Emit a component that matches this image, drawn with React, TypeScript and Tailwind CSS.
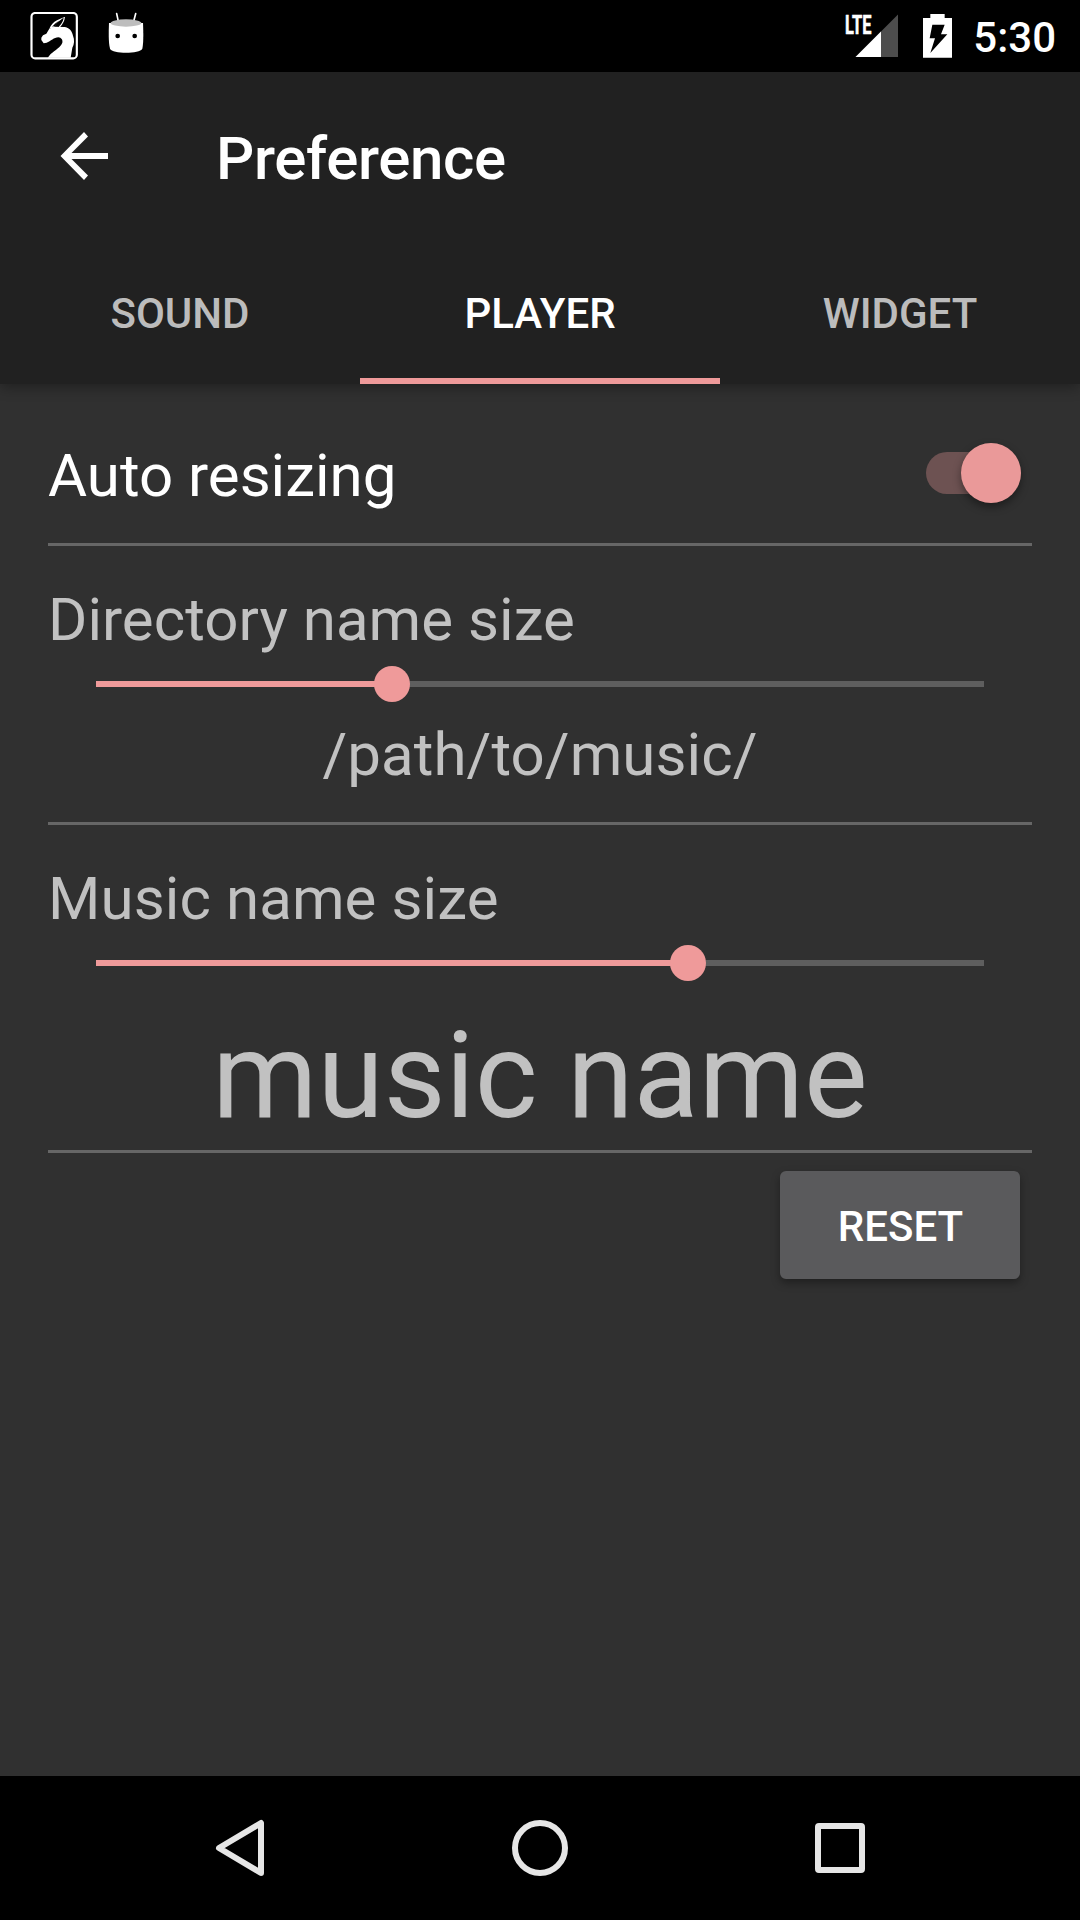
import React from "react";

function DragonIcon() {
  return (
    <svg className="h-12 w-12" viewBox="5 7 144 144" fill="none">
      <rect x="9.500" y="10" width="136" height="136" rx="11" stroke="#fff" strokeWidth="6.500" />
      <path
        d="M39 84L44 77L54 72L63 57L78 51L108 52C123 54 131 64 134 78C139 90 138 103 132 114L127 144H58L67 133C80 122 98 111 102 99C104 91 99 84 90 83C77 83 67 95 55 99L46 101L39 91Z"
        fill="#fff"
      />
      <path d="M63 57C68 46 75 37 86 32L108 22L88 38L75 54Z" fill="#fff" />
      <path d="M71 51C77 44 84 38 92 33L80 49Z" fill="#000" />
      <path d="M108 22C107 34 101 44 93 52" stroke="#fff" strokeWidth="3.500" />
    </svg>
  );
}

function MascotIcon() {
  return (
    <svg className="h-[42px] w-9" viewBox="264 36 108 126">
      <path d="M290 41L295 64M347 41L341 64" stroke="#fff" strokeWidth="5" strokeLinecap="round" />
      <path d="M267 69H369C370 95 371 126 367 146C359 162 277 162 270 146C265 126 266 95 267 69Z" fill="#fff" />
      <ellipse cx="318" cy="69" rx="46" ry="11" fill="#bdbdbd" />
      <circle cx="293" cy="108" r="7" fill="#000" />
      <circle cx="344" cy="108" r="7" fill="#000" />
    </svg>
  );
}

function SignalIcon() {
  return (
    <div className="relative">
      <svg className="h-[48px] w-[54px]" viewBox="0 0 54 48">
        <path d="M53 2.500V45H10.500Z" fill="#4d4d4d" />
        <path d="M36 19.500V45H10.500Z" fill="#fff" />
      </svg>
      <span className="absolute top-[-2px] left-0 origin-left scale-x-[0.63] text-[26px] leading-[30px] font-bold [-webkit-text-stroke:0.6px_white]">
        LTE
      </span>
    </div>
  );
}

function BatteryIcon() {
  return (
    <svg className="ml-[24px] h-11 w-[29px]" viewBox="279 42 87 132">
      <path d="M301 42H344V54H366V173H279V54H301Z" fill="#fff" />
      <path d="M307 74H344L333 103H352L301 159L315 115H299Z" fill="#000" />
    </svg>
  );
}

function StatusBar() {
  return (
    <header className="flex h-[72px] items-start bg-black text-white">
      <div className="flex gap-[30px] pt-3 pl-[30px]">
        <DragonIcon />
        <MascotIcon />
      </div>
      <div className="ml-auto flex pr-[24px]">
        <div className="flex pt-[12px]">
          <SignalIcon />
        </div>
        <div className="flex pt-[14px]">
          <BatteryIcon />
        </div>
        <span className="ml-[21px] pt-[13px] text-[42px] leading-[49px] font-medium">5:30</span>
      </div>
    </header>
  );
}

function Tab({ label, active = false }: { label: string; active?: boolean }) {
  return (
    <button
      className={
        active
          ? "flex-1 border-b-6 border-[#ef9a9a] pt-[9px] text-[42px] leading-[49px] font-medium text-white"
          : "flex-1 border-b-6 border-transparent pt-[9px] text-[42px] leading-[49px] font-medium text-[#bcbcbc]"
      }
    >
      {label}
    </button>
  );
}

function Slider({ value }: { value: number }) {
  return (
    <div className="mx-12 flex h-9 items-center">
      <div className="relative h-1.5 w-full bg-[#5e5e5e]">
        <div className="h-full bg-[#ef9a9a]" style={{ width: `${value * 100}%` }} />
        <div
          className="absolute -top-[15px] -ml-[18px] size-9 rounded-full bg-[#ef9a9a]"
          style={{ left: `${value * 100}%` }}
        />
      </div>
    </div>
  );
}

export default function App() {
  return (
    <div className="flex h-[1920px] w-[1080px] flex-col overflow-hidden bg-[#303030] font-[Roboto,sans-serif]">
      <StatusBar />
      <div className="relative flex h-[312px] flex-col bg-[#212121] shadow-[0_4px_12px_rgba(0,0,0,0.3)]">
        <div className="flex h-[168px] items-center">
          <svg className="ml-[60px] h-12 w-12" viewBox="0 0 48 48">
            <path d="M48 21V27H11.500L28 43.500L24 48L0.500 24L24 0L28 4.500L11.500 21Z" fill="#fff" />
          </svg>
          <h1 className="ml-[108px] pt-[6px] text-[60px] leading-[70px] font-medium tracking-[-0.35px] text-white">
            Preference
          </h1>
        </div>
        <nav className="flex h-36">
          <Tab label="SOUND" />
          <Tab label="PLAYER" active />
          <Tab label="WIDGET" />
        </nav>
      </div>

      <main className="flex flex-1 flex-col px-12 text-[60px] leading-[70px] text-[#c1c1c1]">
        <section className="flex h-[162px] items-start justify-between border-b-3 border-[#666] pt-[57px] text-white">
          <span>Auto resizing</span>
          <div className="mt-[11px] mr-[11px] flex h-[42px] w-[95px] items-center rounded-full bg-[#6d5252]">
            <div className="ml-auto size-[60px] shrink-0 rounded-full bg-[#ea9999] shadow-[0_4px_8px_rgba(0,0,0,0.4)]" />
          </div>
        </section>

        <section className="flex h-[279px] flex-col border-b-3 border-[#666] pt-[39px]">
          <span className="tracking-[0.04px]">Directory name size</span>
          <div className="pt-[11px]">
            <Slider value={1 / 3} />
          </div>
          <span className="pt-[18px] text-center tracking-[0.07px]">/path/to/music/</span>
        </section>

        <section className="flex h-[328px] flex-col border-b-3 border-[#666] pt-[39px]">
          <span className="tracking-[0.1px]">Music name size</span>
          <div className="pt-[11px]">
            <Slider value={2 / 3} />
          </div>
          <span className="pt-[25px] text-center text-[120px] leading-[140px]">music name</span>
        </section>

        <button className="mt-[18px] mr-3 h-[108px] w-[240px] self-end rounded-md bg-[#5a5a5c] pt-[2px] pl-[1px] text-[42px] leading-[49px] font-medium text-white shadow-[0_4px_8px_rgba(0,0,0,0.35)]">
          RESET
        </button>
      </main>

      <footer className="flex h-36 items-center justify-between bg-black px-[210px]">
        <svg className="size-[60px]" viewBox="0 0 60 60" fill="none">
          <path d="M51 5V55L9 30Z" stroke="#e6e6e6" strokeWidth="6" strokeLinejoin="round" />
        </svg>
        <svg className="size-[60px]" viewBox="0 0 60 60" fill="none">
          <circle cx="30" cy="30" r="25" stroke="#e6e6e6" strokeWidth="6" />
        </svg>
        <svg className="size-[60px]" viewBox="0 0 60 60" fill="none">
          <rect x="8" y="8" width="44" height="44" rx="1" stroke="#e6e6e6" strokeWidth="6" />
        </svg>
      </footer>
    </div>
  );
}
